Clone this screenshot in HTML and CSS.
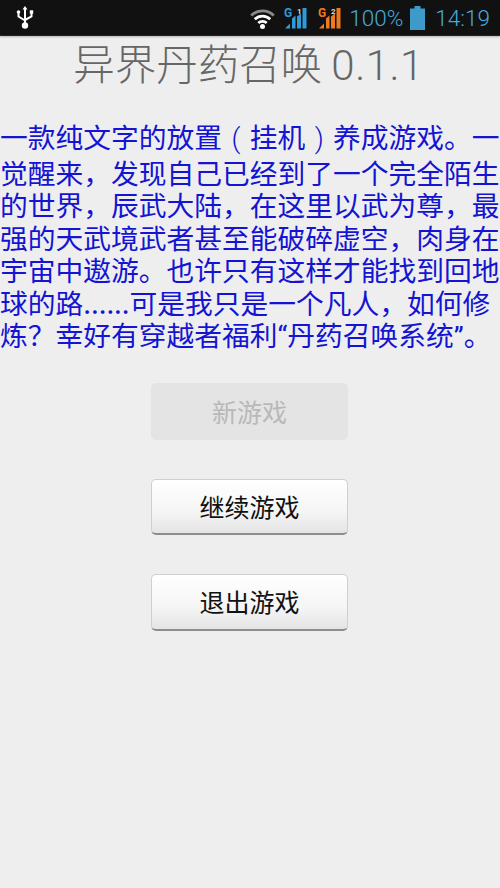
FILE: index.html
```html
<!DOCTYPE html>
<html lang="zh">
<head>
<meta charset="utf-8">
<title>异界丹药召唤</title>
<link rel="stylesheet" href="styles.css">
</head>
<body>
<header class="status">
  <svg class="usb" width="20" height="24" viewBox="0 0 20 24">
    <path d="M10 2v17M3.500 7v3.500l6.500 4M16.500 7v3.500l-6.500 3.500" fill="none" stroke="#fff" stroke-width="2"/>
    <path d="M10 0l2.500 3.500h-5z" fill="#fff"/>
    <circle cx="10" cy="19.500" r="3.200" fill="#fff"/>
    <circle cx="3.500" cy="6" r="1.800" fill="#fff"/>
    <rect x="14.800" y="4.300" width="3.400" height="3.400" fill="#fff"/>
  </svg>
  <div class="status-right">
    <svg class="wifi" width="25" height="22" viewBox="0 0 25 22">
      <path d="M1.200 8.500a16 16 0 0 1 22.600 0" fill="none" stroke="#8a8a8a" stroke-width="2.800"/>
      <path d="M4.800 12.300a11 11 0 0 1 15.400 0M8.300 16a6 6 0 0 1 8.400 0" fill="none" stroke="#fff" stroke-width="2.800"/>
      <circle cx="12.500" cy="19.500" r="2.500" fill="#fff"/>
    </svg>
    <svg class="signal" width="23" height="22" viewBox="0 0 23 22">
      <text x="0" y="10" class="sig-g blue">G</text>
      <text x="13" y="7" class="sig-n">1</text>
      <path class="blue" d="M1 21.500l5-5v5zM8 21.500V11.500l3.500-3v13zM13 21.500V9.500l4-3v15zM18.500 21.500V1h4v20.500z"/>
    </svg>
    <svg class="signal" width="23" height="22" viewBox="0 0 23 22">
      <text x="0" y="10" class="sig-g orange">G</text>
      <text x="13" y="7" class="sig-n">2</text>
      <path class="orange" d="M1 21.500l5-5v5zM8 21.500V11.500l3.500-3v13zM13 21.500V9.500l4-3v15zM18.500 21.500V1h4v20.500z"/>
    </svg>
    <span class="pct">100%</span>
    <svg class="battery" width="15" height="24" viewBox="0 0 15 24">
      <path d="M4.500 0h6v2.500H15V24H0V2.500h4.500z" fill="#3d9ac9"/>
    </svg>
    <span class="clock">14:19</span>
  </div>
</header>
<main class="page">
  <h1 class="title">异界丹药召唤 <span class="version">0.1.1</span></h1>
  <p class="intro">一款纯文字的放置<span class="paren">(</span>挂机<span class="paren">)</span>养成游戏。一觉醒来，发现自己已经到了一个完全陌生的世界，辰武大陆，在这里以武为尊，最强的天武境武者甚至能破碎虚空，肉身在宇宙中遨游。也许只有这样才能找到回地球的路......可是我只是一个凡人，如何修炼？幸好有穿越者福利<span class="quote">“</span>丹药召唤系统<span class="quote">”</span>。</p>
  <nav class="menu">
    <button class="btn btn-off" type="button">新游戏</button>
    <button class="btn" type="button">继续游戏</button>
    <button class="btn" type="button">退出游戏</button>
  </nav>
</main>
</body>
</html>
```
FILE: styles.css
```css
* { box-sizing: border-box; }
html, body { margin: 0; padding: 0; }
body {
  width: 500px;
  height: 888px;
  overflow: hidden;
  background: #eeeeee;
  font-family: "Noto Sans CJK SC", "Noto Sans", sans-serif;
}
.status {
  height: 36px;
  background: #111;
  border-bottom: 1px solid #222;
  box-shadow: 0 1px 2px rgba(0,0,0,.25);
  display: flex;
  align-items: center;
  justify-content: space-between;
  padding: 0 10px 0 15px;
}
.usb { display: block; }
.status-right { display: flex; align-items: center; }
.wifi { margin-right: 9px; }
.signal { margin-right: 11px; }
.signal + .signal { margin-right: 8px; }
.signal text { font-family: "Roboto", sans-serif; }
.sig-g { font-size: 12px; font-weight: 700; }
.sig-n { font-size: 8px; font-weight: 700; fill: #ddd; }
.blue { fill: #2f9ad8; }
.orange { fill: #ee7a20; }
.pct, .clock {
  font-family: "Roboto", sans-serif;
  font-weight: 300;
  color: #45a9dc;
  font-size: 22.5px;
  line-height: 36px;
}
.battery { margin: 0 10px 0 7px; }
.title {
  margin: 0;
  height: 55px;
  padding-right: 3px;
  text-align: center;
  font-weight: 300;
  font-size: 41.5px;
  line-height: 52px;
  color: #666;
  white-space: nowrap;
}
.version {
  font-family: "Roboto", sans-serif;
  font-weight: 300;
  font-size: 42px;
  letter-spacing: 0.5px;
}
.intro {
  margin: 0;
  padding-top: 29px;
  color: #1414d2;
  font-size: 27.75px;
  line-height: 32.5px;
  height: 258px;
}
.paren {
  display: inline-block;
  width: 1em;
  text-align: center;
  font-family: "Roboto", sans-serif;
  font-weight: 300;
}
.quote { font-family: "Roboto", sans-serif; }
.menu {
  display: flex;
  flex-direction: column;
  align-items: center;
  padding-right: 1px;
  gap: 39px;
  margin-top: 34px;
}
.btn {
  width: 197px;
  height: 56.5px;
  font: inherit;
  font-size: 25px;
  color: #111;
  border: 1px solid #cfcfcf;
  border-bottom: 2px solid #8d8d8d;
  border-radius: 5px;
  background: linear-gradient(#fff, #f5f5f5 60%, #e4e4e4);
  padding: 0 0 1px;
}
.btn-off {
  background: #e4e4e4;
  border: none;
  color: #b8b8b8;
}
```
